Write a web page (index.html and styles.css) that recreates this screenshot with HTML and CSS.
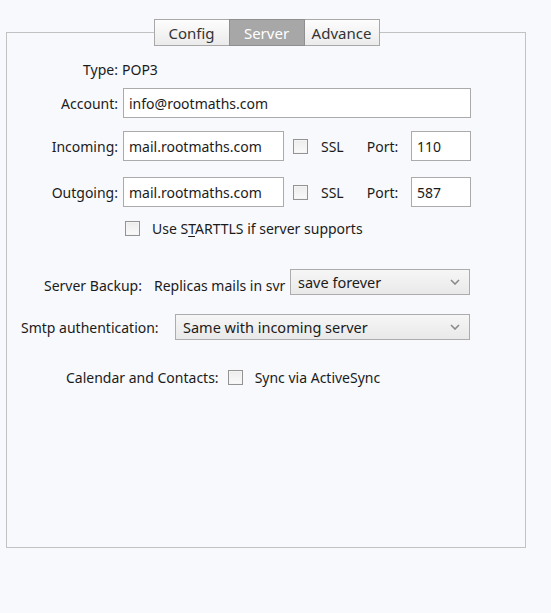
FILE: index.html
```html
<!DOCTYPE html>
<html>
<head>
<meta charset="utf-8">
<link rel="stylesheet" href="styles.css">
</head>
<body>
<div class="panel">
  <div class="tabs">
    <div class="tab">Config</div>
    <div class="tab active">Server</div>
    <div class="tab">Advance</div>
  </div>

  <div class="row row-type">
    <span class="label">Type:</span>
    <span class="value">POP3</span>
  </div>

  <div class="row row-account">
    <span class="label">Account:</span>
    <div class="input wide">info@rootmaths.com</div>
  </div>

  <div class="row row-in">
    <span class="label">Incoming:</span>
    <div class="input host">mail.rootmaths.com</div>
    <span class="check ssl-check"></span>
    <span class="ssl">SSL</span>
    <span class="port-label">Port:</span>
    <div class="input port">110</div>
  </div>

  <div class="row row-out">
    <span class="label">Outgoing:</span>
    <div class="input host">mail.rootmaths.com</div>
    <span class="check ssl-check"></span>
    <span class="ssl">SSL</span>
    <span class="port-label">Port:</span>
    <div class="input port">587</div>
  </div>

  <div class="row row-tls">
    <span class="check"></span>
    <span class="tls-text">Use S<u>T</u>ARTTLS if server supports</span>
  </div>

  <div class="row row-backup">
    <span class="shift">Server Backup:</span>
    <span class="shift replicas">Replicas mails in svr</span>
    <div class="select backup-select">
      <span>save forever</span>
      <svg class="chev" width="10" height="6" viewBox="0 0 10 6"><polyline points="1,1 5,5 9,1" fill="none" stroke="#8a8a8a" stroke-width="1.6"/></svg>
    </div>
  </div>

  <div class="row row-smtp">
    <span>Smtp authentication:</span>
    <div class="select smtp-select">
      <span>Same with incoming server</span>
      <svg class="chev" width="10" height="6" viewBox="0 0 10 6"><polyline points="1,1 5,5 9,1" fill="none" stroke="#8a8a8a" stroke-width="1.6"/></svg>
    </div>
  </div>

  <div class="row row-cal">
    <span>Calendar and Contacts:</span>
    <span class="check cal-check"></span>
    <span>Sync via ActiveSync</span>
  </div>
</div>
</body>
</html>
```

FILE: styles.css
```css
html, body {
  margin: 0;
  padding: 0;
  background: #f7f9fd;
}

body {
  font-family: "Noto Sans", "Open Sans", sans-serif;
  font-size: 14px;
  color: #1b1b1b;
}

.panel {
  box-sizing: border-box;
  width: 520px;
  height: 516px;
  margin: 32px 0 0 6px;
  border: 1px solid #c2c2c2;
  display: flex;
  flex-direction: column;
}

.tabs {
  display: flex;
  justify-content: center;
  margin-top: -14px;
  padding-left: 1px;
}

.tab {
  box-sizing: border-box;
  width: 76px;
  height: 27px;
  border: 1px solid #a8a8a8;
  background: linear-gradient(#fdfdfd, #ebebeb);
  color: #333;
  font-size: 15px;
  display: flex;
  align-items: center;
  justify-content: center;
}

.tab + .tab {
  margin-left: -1px;
}

.tab.active {
  background: #a7a7a7;
  border-color: #8f8f8f;
  color: #fff;
  position: relative;
}

.row {
  display: flex;
  align-items: center;
  padding-right: 54px;
}

.label {
  width: 111px;
  text-align: right;
  flex: none;
}

.row-type {
  margin-top: 13px;
  height: 20px;
}

.row-type .value {
  margin-left: 4px;
}

.row-account {
  margin-top: 9px;
}

.row-in {
  margin-top: 13px;
}

.row-out {
  margin-top: 16px;
}

.input {
  box-sizing: border-box;
  height: 30px;
  border: 1px solid #ababab;
  background: #fff;
  padding-left: 5px;
  display: flex;
  align-items: center;
  margin-left: 5px;
  font-size: 14px;
}

.input.wide {
  flex: 1;
}

.input.host {
  width: 161px;
}

.input.port {
  width: 60px;
  margin-left: auto;
}

.check {
  box-sizing: border-box;
  width: 15px;
  height: 15px;
  border: 1px solid #939393;
  background: linear-gradient(#ececec, #fafafa);
  box-shadow: inset 0 0 0 1px #f4f4f4;
  flex: none;
}

.ssl-check {
  margin-left: 9px;
}

.ssl {
  margin-left: 13px;
}

.port-label {
  margin-left: 23px;
}

.row-tls {
  margin-top: 11px;
  height: 20px;
  padding-left: 118px;
}

.tls-text {
  margin-left: 12px;
}

.tls-text u {
  text-underline-offset: 2px;
}

.row-backup {
  margin-top: 31px;
  padding-left: 37px;
  padding-right: 55px;
}

.shift {
  padding-top: 6px;
}

.replicas {
  margin-left: 12px;
}

.select {
  box-sizing: border-box;
  height: 26px;
  border: 1px solid #acacac;
  background: linear-gradient(#f6f6f6, #e9e9e9);
  display: flex;
  align-items: center;
  justify-content: space-between;
  padding: 0 9px 0 7px;
  margin-left: auto;
  font-size: 14.5px;
}

.backup-select {
  width: 180px;
}

.smtp-select {
  width: 295px;
}

.chev {
  display: block;
}

.row-smtp {
  margin-top: 19px;
  padding-left: 14px;
  padding-right: 55px;
}

.row-cal {
  margin-top: 27px;
  height: 20px;
  padding-left: 59px;
}

.cal-check {
  margin: 0 12px 0 9px;
}
```
